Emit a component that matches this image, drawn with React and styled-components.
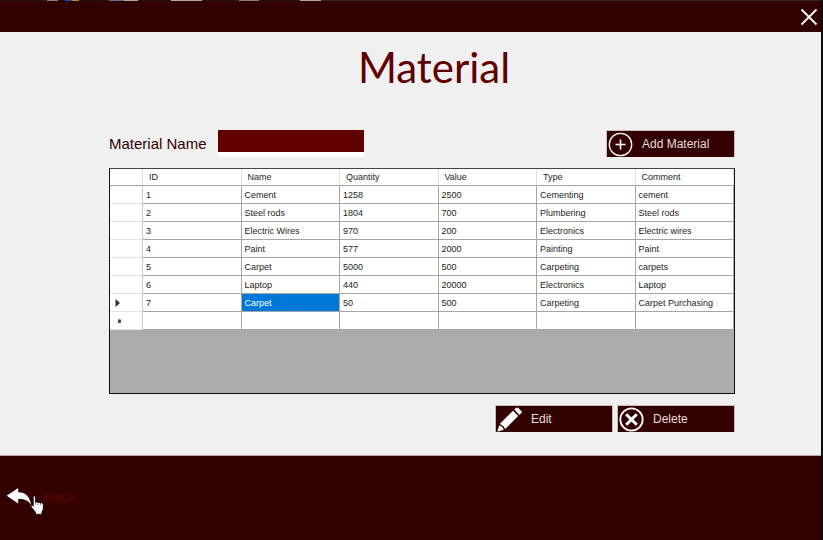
import React, { useState } from "react";
import styled, { createGlobalStyle } from "styled-components";

const GlobalStyle = createGlobalStyle`
  *, *::before, *::after { box-sizing: border-box; }
  body { margin: 0; background: #14110f; font-family: "Liberation Sans", Arial, sans-serif; }
  button, input { font-family: inherit; }
`;

const Desktop = styled.div`
  display: flex;
  flex-direction: column;
  min-height: 100vh;
  padding-right: 2px;
  background: linear-gradient(90deg, #3a3a40, #0b0b0e);
`;

const TaskStrip = styled.div`
  height: 1px;
  background: linear-gradient(
    90deg,
    #1c1816 47px, #8a807a 47px 58px, #14141c 58px 65px, #14549c 65px 72px,
    #c08430 72px 79px, #1c1410 79px 109px, #6a6a90 109px 124px, #b4a8a0 124px 138px,
    #1c1816 138px 171px, #b4a8a0 171px 202px, #1c1816 202px 239px, #8a807a 239px 259px,
    #1c1816 259px 300px, #b4a8a0 300px 321px, #2c282c 321px
  );
`;

const TitleBar = styled.header`
  display: flex;
  justify-content: flex-end;
  align-items: center;
  height: 31px;
  padding: 0 3px;
  background: #330000;
`;

const CloseButton = styled.button`
  display: flex;
  padding: 0;
  border: 0;
  background: none;
  color: #fff;
  cursor: pointer;
`;

const Main = styled.main`
  display: flex;
  flex-direction: column;
  padding: 11px 86px 23px 109px;
  background: #f0f0f0;
  border-bottom: 1px solid #b4a6a6;
`;

const Title = styled.h1`
  margin: 0 0 39px;
  padding-left: 24px;
  color: #600000;
  font-family: Lato, "Open Sans", sans-serif;
  font-size: 42px;
  font-weight: 400;
  line-height: 48px;
  text-align: center;
`;

const Toolbar = styled.div`
  display: flex;
  justify-content: space-between;
  align-items: flex-start;
  margin-bottom: 11px;
`;

const Field = styled.label`
  display: flex;
  align-items: center;
  gap: 11px;
  color: #330000;
  font-size: 15px;
  line-height: 27px;
`;

const NameInput = styled.input`
  width: 146px;
  height: 27px;
  padding: 0 4px;
  border: 0;
  border-bottom: 5px solid #fff;
  background: #600000;
  color: #fff;
  font-size: 12px;
  outline: none;
`;

const ActionButton = styled.button`
  display: flex;
  align-items: center;
  gap: 9px;
  width: ${(p) => (p.$wide ? "129px" : "118px")};
  height: 27px;
  padding: 0 1px;
  border: 1px solid #c9bcbc;
  border-width: 1px 1px 0 1px;
  background: #330000;
  color: #e6dede;
  font-size: 12px;
  text-align: left;
  cursor: pointer;
`;

const GridFrame = styled.div`
  min-height: 226px;
  border: 1px solid #111;
  border-top-color: #444;
  background: #ababab;
`;

const Grid = styled.table`
  width: 100%;
  table-layout: fixed;
  border-collapse: separate;
  border-spacing: 0;
  background: #fff;
  color: #1c1c1c;
  font-size: 9px;
  line-height: 12px;
`;

const HeadCell = styled.th`
  width: ${(p) => (p.$marker ? "33px" : "auto")};
  height: 17px;
  padding: 0 6px;
  border-right: 1px solid #e0e0e0;
  border-bottom: 1px solid #a0a0a0;
  font-weight: 400;
  text-align: left;
`;

const MarkerCell = styled.th`
  height: 18px;
  padding: 0 5px;
  border-right: 1px solid #c8c8c8;
  border-bottom: 1px solid #e2e2e2;
`;

const MarkerIcon = styled.svg`
  display: block;
`;

const Cell = styled.td`
  height: 18px;
  padding: 0 3px;
  border-right: 1px solid #a6a6a6;
  border-bottom: 1px solid #a6a6a6;
  background: ${(p) => (p.$selected ? "#0078d7" : "#fff")};
  color: ${(p) => (p.$selected ? "#fff" : "inherit")};
  white-space: nowrap;
`;

const Actions = styled.div`
  display: flex;
  justify-content: flex-end;
  gap: 4px;
  margin-top: 11px;
`;

const Footer = styled.footer`
  flex: 1;
  padding: 30px 6px;
  background: #330000;
`;

const BackButton = styled.button`
  position: relative;
  display: flex;
  align-items: center;
  gap: 11px;
  height: 20px;
  padding: 0;
  border: 0;
  background: none;
  color: #600000;
  font-size: 15px;
  cursor: pointer;
`;

const Pointer = styled.svg`
  position: absolute;
  left: 24px;
  top: 9px;
  pointer-events: none;
`;

const columns = ["ID", "Name", "Quantity", "Value", "Type", "Comment"];

const materials = [
  ["1", "Cement", "1258", "2500", "Cementing", "cement"],
  ["2", "Steel rods", "1804", "700", "Plumbering", "Steel rods"],
  ["3", "Electric Wires", "970", "200", "Electronics", "Electric wires"],
  ["4", "Paint", "577", "2000", "Painting", "Paint"],
  ["5", "Carpet", "5000", "500", "Carpeting", "carpets"],
  ["6", "Laptop", "440", "20000", "Electronics", "Laptop"],
  ["7", "Carpet", "50", "500", "Carpeting", "Carpet Purchasing"],
  ["", "", "", "", "", ""],
];

const CloseIcon = () => (
  <svg width="18" height="18" viewBox="0 0 18 18" fill="none" stroke="currentColor" strokeWidth="1.8">
    <path d="M1.5 1.5 16.5 16.5M16.5 1.5 1.5 16.5" />
  </svg>
);

const AddIcon = () => (
  <svg width="25" height="25" viewBox="0 0 25 25" fill="none" stroke="#fff">
    <circle cx="12.5" cy="12.5" r="11.2" strokeWidth="1.3" />
    <path d="M12.5 7.5v10M7.5 12.5h10" strokeWidth="1.6" />
  </svg>
);

const EditIcon = () => (
  <svg width="25" height="25" viewBox="0 0 25 25" fill="#fff">
    <path d="M17.2 2.6 19 .9q1.2-.9 2.4.2l2.8 2.9q1 1.2 0 2.3l-1.8 1.8z" />
    <path d="M15.9 3.8 21.2 9.1 8.1 22 6.6 19.2 5.5 18.7 2.9 16.8z" />
    <path d="M2.3 18.2 4.8 19.8 5.6 20.4 6.8 22.7.3 24.7z" />
  </svg>
);

const DeleteIcon = () => (
  <svg width="25" height="25" viewBox="0 0 25 25" fill="none" stroke="#fff">
    <circle cx="12.5" cy="12.5" r="11.2" strokeWidth="1.8" />
    <path d="M7.2 7.2l10.6 10.6M17.8 7.2L7.2 17.8" strokeWidth="3" />
  </svg>
);

const BackIcon = () => (
  <svg width="26" height="18" viewBox="0 0 26 18" fill="#fff">
    <path d="M.7 8.8 12.2 1V5.2C19.5 5.4 24 9.4 25 17.9 22 13 18.4 11.8 12.2 12V16.6z" />
  </svg>
);

const HandPointer = () => (
  <Pointer width="16" height="20" viewBox="0 0 15 19" aria-hidden="true">
    <path
      d="M3 1.8Q4 .2 5.1 1.8V7.2L6.2 6.3 7.5 7.5 8.7 6.7 9.8 8 11 7.2 12.5 8.8V13.5L11.2 16.2V18.3H5.1V16.5L1 11.3Q.6 9.6 2 9.7L3 10.6z"
      fill="#fff"
      stroke="#111"
      strokeWidth=".8"
    />
    <path d="M5.3 7.5v2M7.6 8v1.5M9.9 8.3v1.2" stroke="#222" strokeWidth=".5" />
  </Pointer>
);

const RowMarker = ({ kind }) => (
  <MarkerIcon width="9" height="9" viewBox="0 0 9 9" fill="#333" aria-hidden="true">
    {kind === "current" && <path d="M.5 1 5 5 .5 9z" />}
    {kind === "new" && (
      <path
        d="M4.5 3.2v4M2.8 4.2l3.4 2M6.2 4.2l-3.4 2M3.2 3.6l2.6 3.2M5.8 3.6 3.2 6.8"
        stroke="#444"
        strokeWidth="1"
      />
    )}
  </MarkerIcon>
);

export default function App() {
  const [name, setName] = useState("");

  return (
    <>
      <GlobalStyle />
      <Desktop>
        <TaskStrip />
        <TitleBar>
          <CloseButton type="button" aria-label="Close">
            <CloseIcon />
          </CloseButton>
        </TitleBar>
        <Main>
          <Title>Material</Title>
          <Toolbar>
            <Field>
              Material Name
              <NameInput type="text" value={name} onChange={(e) => setName(e.target.value)} />
            </Field>
            <ActionButton type="button" $wide>
              <AddIcon />
              Add Material
            </ActionButton>
          </Toolbar>
          <GridFrame>
            <Grid>
              <thead>
                <tr>
                  <HeadCell $marker />
                  {columns.map((column) => (
                    <HeadCell key={column} scope="col">{column}</HeadCell>
                  ))}
                </tr>
              </thead>
              <tbody>
                {materials.map((row, r) => (
                  <tr key={r}>
                    <MarkerCell scope="row">
                      <RowMarker kind={r === 6 ? "current" : r === 7 ? "new" : ""} />
                    </MarkerCell>
                    {row.map((value, c) => (
                      <Cell key={columns[c]} $selected={r === 6 && c === 1}>{value}</Cell>
                    ))}
                  </tr>
                ))}
              </tbody>
            </Grid>
          </GridFrame>
          <Actions>
            <ActionButton type="button">
              <EditIcon />
              Edit
            </ActionButton>
            <ActionButton type="button">
              <DeleteIcon />
              Delete
            </ActionButton>
          </Actions>
        </Main>
        <Footer>
          <BackButton type="button">
            <BackIcon />
            Back
            <HandPointer />
          </BackButton>
        </Footer>
      </Desktop>
    </>
  );
}
